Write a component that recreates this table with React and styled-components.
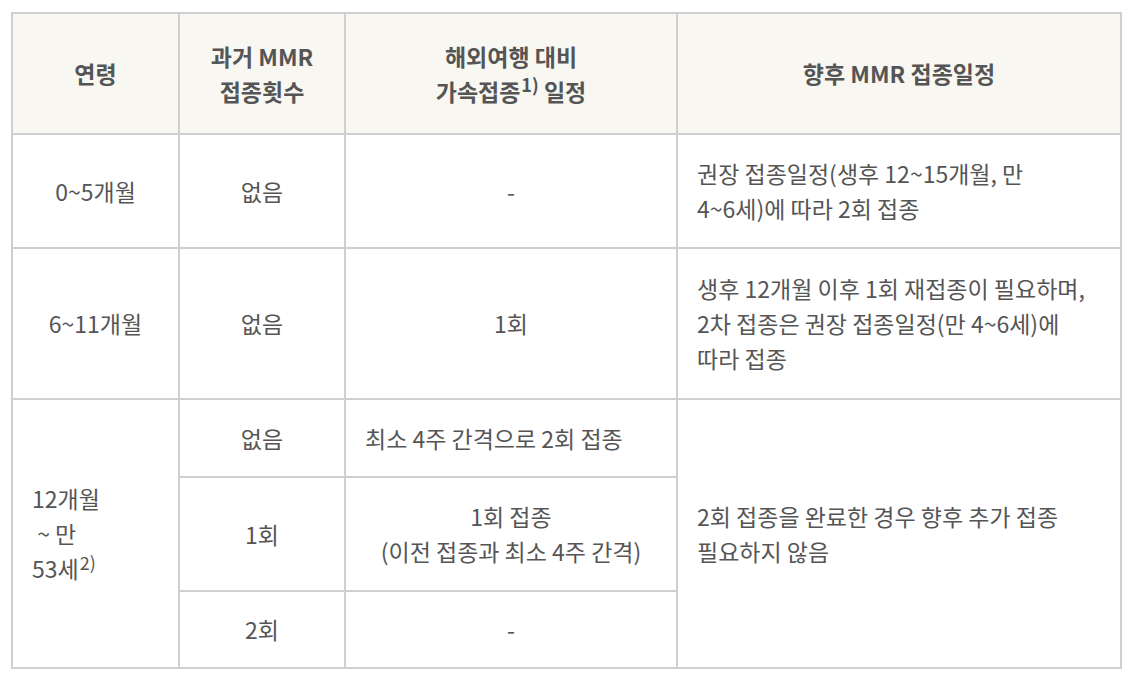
import styled, { createGlobalStyle } from "styled-components";

const GlobalStyle = createGlobalStyle`
  html, body {
    margin: 0;
    padding: 0;
    background: #fff;
  }
  body {
    font-family: "Noto Sans CJK KR", "Noto Sans", sans-serif;
  }
`;

const Page = styled.div`
  padding: 12px 12px 0 11px;
`;

const Table = styled.table`
  width: 1111px;
  table-layout: fixed;
  border-collapse: separate;
  border-spacing: 0;
  border-top: 2px solid #cfcfcf;
  border-left: 2px solid #cfcfcf;
  font-size: 23px;
  line-height: 35px;
  color: #555;
`;

const Row = styled.tr`
  height: ${(p) => p.$h}px;
`;

const Head = styled.th`
  box-sizing: border-box;
  width: ${(p) => p.$w}px;
  padding: 0 8px;
  background: #f8f7f1;
  border-right: 2px solid #cfcfcf;
  border-bottom: 2px solid #cfcfcf;
  font-weight: 700;
  color: #555;
  text-align: center;
  vertical-align: middle;
`;

const Cell = styled.td`
  box-sizing: border-box;
  padding: 0 19px;
  border-right: 2px solid #cfcfcf;
  border-bottom: 2px solid #cfcfcf;
  text-align: ${(p) => (p.$left ? "left" : "center")};
  vertical-align: middle;
  font-weight: 400;
  white-space: nowrap;
`;

const Note = styled.sup`
  font-size: 0.78em;
  line-height: 0;
  vertical-align: 0.45em;
  margin-left: 1px;
`;

export default function App() {
  return (
    <>
      <GlobalStyle />
      <Page>
        <Table>
          <thead>
            <Row $h={121}>
              <Head $w={167}>연령</Head>
              <Head $w={166}>
                과거 MMR
                <br />
                접종횟수
              </Head>
              <Head $w={332}>
                해외여행 대비
                <br />
                가속접종<Note>1)</Note> 일정
              </Head>
              <Head $w={444}>향후 MMR 접종일정</Head>
            </Row>
          </thead>
          <tbody>
            <Row $h={114}>
              <Cell>0~5개월</Cell>
              <Cell>없음</Cell>
              <Cell>-</Cell>
              <Cell $left>
                권장 접종일정(생후 12~15개월, 만
                <br />
                4~6세)에 따라 2회 접종
              </Cell>
            </Row>
            <Row $h={151}>
              <Cell>6~11개월</Cell>
              <Cell>없음</Cell>
              <Cell>1회</Cell>
              <Cell $left>
                생후 12개월 이후 1회 재접종이 필요하며,
                <br />
                2차 접종은 권장 접종일정(만 4~6세)에
                <br />
                따라 접종
              </Cell>
            </Row>
            <Row $h={78}>
              <Cell $left rowSpan={3}>
                12개월
                <br />
                &nbsp;~ 만
                <br />
                53세<Note>2)</Note>
              </Cell>
              <Cell>없음</Cell>
              <Cell $left>최소 4주 간격으로 2회 접종</Cell>
              <Cell $left rowSpan={3}>
                2회 접종을 완료한 경우 향후 추가 접종
                <br />
                필요하지 않음
              </Cell>
            </Row>
            <Row $h={114}>
              <Cell>1회</Cell>
              <Cell>
                1회 접종
                <br />
                (이전 접종과 최소 4주 간격)
              </Cell>
            </Row>
            <Row $h={77}>
              <Cell>2회</Cell>
              <Cell>-</Cell>
            </Row>
          </tbody>
        </Table>
      </Page>
    </>
  );
}
